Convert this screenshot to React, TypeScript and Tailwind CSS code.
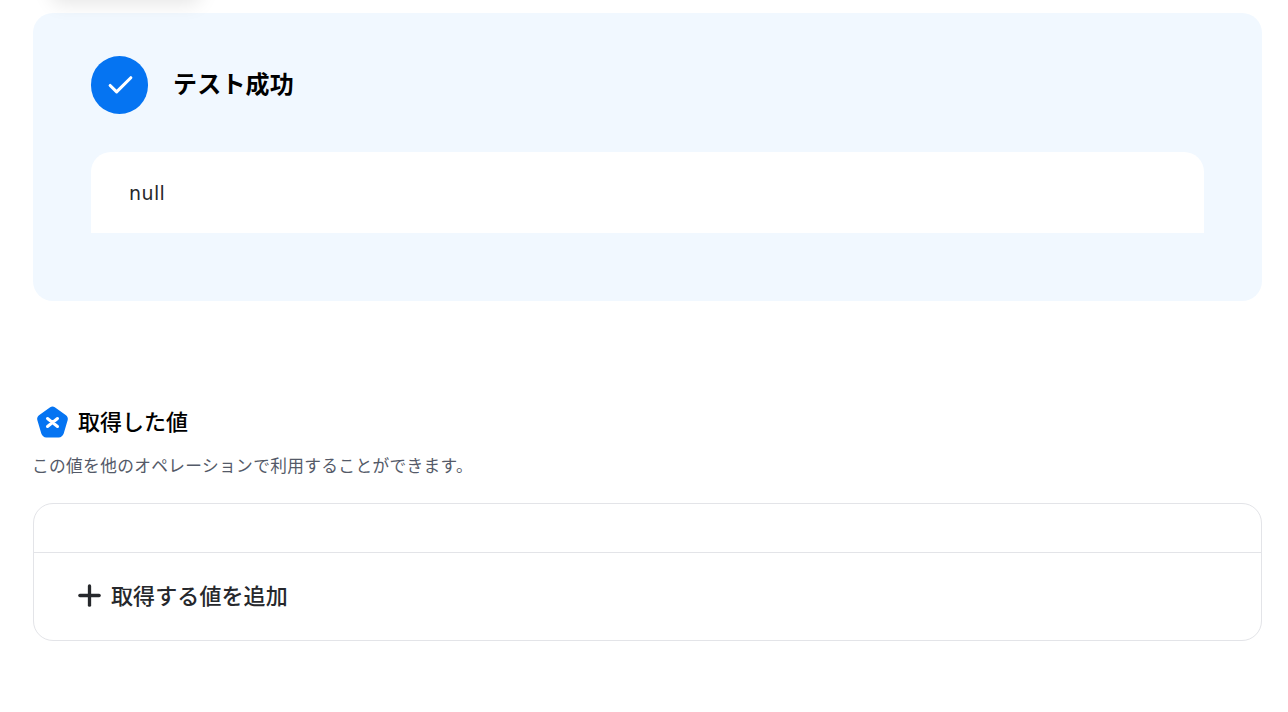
import { Check, Plus } from 'lucide-react'

const font = { fontFamily: '"DejaVu Sans", "Noto Sans CJK JP", sans-serif' }

const App = () => {
    return (
        <div
            style={font}
            className="relative h-[712px] w-[1288px] overflow-hidden bg-white pl-[33px] pr-[26px] pt-[13px]"
        >
            {/* button above the fold, only its shadow is visible */}
            <div className="absolute left-[52px] top-[-40px] h-[40px] w-[148px] rounded-lg shadow-[0_3px_20px_rgba(0,0,0,0.11)]" />

            <div className="h-[288px] rounded-[20px] bg-[#f1f8ff] px-[58px] pt-[43px]">
                <div className="flex items-center gap-[26px]">
                    <div className="flex h-[58px] w-[57px] items-center justify-center rounded-full bg-[#0574f2]">
                        <Check className="ml-[2px] h-[31px] w-[31px] text-white" strokeWidth={2.4} />
                    </div>
                    <h2 className="-ml-px text-[24px] font-bold tracking-[0.2px] text-black">テスト成功</h2>
                </div>
                <div className="mt-[38px] h-[81px] rounded-t-[20px] bg-white px-[38px] pt-[28px]">
                    <p className="text-[19px] leading-[27px] tracking-[0.4px] text-[#26282c]">null</p>
                </div>
            </div>

            <div className="mt-[105px] flex h-[32px] items-center gap-[9px] pl-[3px]">
                <svg viewBox="0 0 33 32" className="h-[32px] w-[33px]">
                    <path
                        d="M14.2 1.200 3 9.300C1.500 10.400.8 12.300 1.300 14l4 13.500C6 29.700 8 31.500 10.300 31.500h12.400c2.300 0 4.300-1.800 5-4l4-13.500c.5-1.700-.2-3.600-1.700-4.700L18.800 1.200c-1.400-1-3.200-1-4.600 0Z"
                        fill="#0574f2"
                    />
                    <path
                        d="M11.500 12.500 16.500 16.500l5-4M11.500 20.500l5-4 5 4"
                        fill="none"
                        stroke="#fff"
                        strokeWidth="3"
                        strokeLinecap="round"
                    />
                </svg>
                <h3 className="pt-[2px] text-[22px] font-medium leading-[32px] text-black">取得した値</h3>
            </div>
            <p className="mt-[16px] -ml-px text-[16.700px] leading-[24px] tracking-[0.35px] text-[#545a68]">
                この値を他のオペレーションで利用することができます。
            </p>

            <div className="mt-[25px] h-[138px] rounded-[20px] border border-[#e3e4e8]">
                <div className="h-[49px] border-b border-[#e3e4e8]" />
                <div className="flex h-[87px] items-center gap-[5px] pl-[39px]">
                    <Plus className="-mt-[2px] h-[33px] w-[33px] text-[#26282c]" strokeWidth={2.4} />
                    <span className="text-[22px] font-medium tracking-[0.1px] text-[#26282c]">取得する値を追加</span>
                </div>
            </div>
        </div>
    )
}

export default App
